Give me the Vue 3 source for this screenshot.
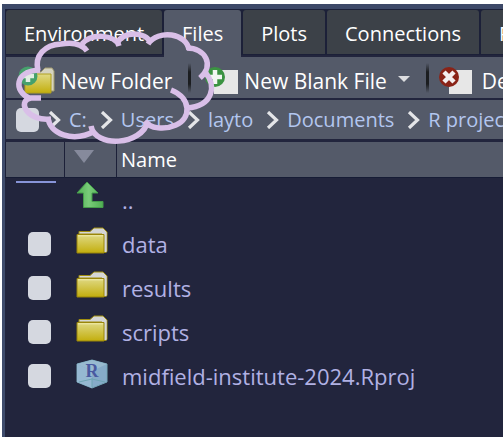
<script setup>
import { ref } from 'vue'

const tabs = ['Environment', 'Files', 'Plots', 'Connections', 'Packages']
const active = ref('Files')
const crumbs = ['C:', 'Users', 'layto', 'Documents', 'R projects']
const files = [
  { name: 'data', kind: 'folder' },
  { name: 'results', kind: 'folder' },
  { name: 'scripts', kind: 'folder' },
  { name: 'midfield-institute-2024.Rproj', kind: 'project' },
]
</script>

<template>
  <main class="window">
    <svg class="defs" aria-hidden="true">
      <defs>
        <linearGradient id="gold" x1="0" y1="0" x2="0" y2="1">
          <stop offset="0" stop-color="#dfd984" />
          <stop offset="1" stop-color="#c3ae0c" />
        </linearGradient>
        <linearGradient id="leaf" x1="0" y1="0" x2="1" y2="0">
          <stop offset="0" stop-color="#50b053" />
          <stop offset="0.45" stop-color="#79cc79" />
          <stop offset="1" stop-color="#4fae52" />
        </linearGradient>
        <symbol id="folder" viewBox="0 0 32 28">
          <path d="M3 7V4.500H14L18 1H27L31 5V24Q31 25.500 29 25.500H26V7Z" fill="#d5d6d6" stroke="#a08e10" />
          <path d="M28.500 7V25H30.500V5" fill="#d5d6d6" />
          <path d="M1 7.500H28V26H1Z" fill="url(#gold)" stroke="#9a860a" />
          <path d="M2 8.800H27" stroke="#f0ecaa" />
        </symbol>
      </defs>
    </svg>

    <div class="pane">
      <nav class="tabs">
        <button v-for="t in tabs" :key="t" class="tab" :class="{ on: t === active }" @click="active = t">{{ t }}</button>
      </nav>

      <div class="toolbar">
        <button class="tool">
          <svg class="tool-icon" viewBox="0 0 37 30">
            <path d="M9 7H23L27 3H34L36 6V26H9Z" fill="#d5d3c0" stroke="#a29b70" />
            <path d="M7 9H33V28H7Z" fill="url(#gold)" stroke="#b0a020" />
            <circle cx="10" cy="11" r="9.500" fill="#46a06c" />
            <path d="M10 5V17M4 11H16" stroke="#e2eee4" stroke-width="4.500" />
          </svg>
          New Folder
        </button>
        <span class="rule"></span>
        <button class="tool">
          <svg class="tool-icon" viewBox="0 0 37 30">
            <path d="M13 5H37V29H13Z" fill="#e7e7e7" />
            <circle cx="14" cy="12" r="10" fill="#3b9342" />
            <path d="M14 5V19M7 12H21" stroke="#f2f7f2" stroke-width="4.500" />
          </svg>
          New Blank File
          <svg class="caret" viewBox="0 0 12 6"><path d="M0 0H12L6 6Z" fill="#dcdde0" /></svg>
        </button>
        <span class="rule"></span>
        <button class="tool">
          <svg class="tool-icon" viewBox="0 0 37 30">
            <path d="M10 5H33V29H10Z" fill="#e7e7e7" />
            <circle cx="10" cy="12" r="10" fill="#8a2317" />
            <path d="M5 7L15 17M15 7L5 17" stroke="#f4eeee" stroke-width="4.500" />
          </svg>
          Delete
        </button>
      </div>

      <div class="crumbs">
        <input type="checkbox" class="box" aria-label="Select all files" />
        <template v-for="c in crumbs" :key="c">
          <svg class="chevron" viewBox="0 0 13 18"><path d="M2 1L10.500 9L2 17" fill="none" stroke="#e4e5e8" stroke-width="3.200" /></svg>
          <a href="#" class="crumb">{{ c }}</a>
        </template>
      </div>

      <table class="files">
        <thead>
          <tr>
            <th class="pick"></th>
            <th class="kind"><svg class="sort" viewBox="0 0 20 13"><path d="M0 0H20L10 13Z" fill="#868a9c" /></svg></th>
            <th class="name">Name</th>
          </tr>
        </thead>
        <tbody>
          <tr>
            <td class="pick parent"><span class="dash"></span></td>
            <td class="kind">
              <svg class="up" viewBox="0 0 28 28">
                <path d="M11 1L22 12H16V20.500H27V26.500H7.500V12H1Z" fill="url(#leaf)" stroke="#459c4b" />
              </svg>
            </td>
            <td class="name"><a href="#">..</a></td>
          </tr>
          <tr v-for="f in files" :key="f.name">
            <td class="pick"><input type="checkbox" class="box" :aria-label="f.name" /></td>
            <td class="kind">
              <svg v-if="f.kind === 'folder'" class="icon" viewBox="0 0 32 28"><use href="#folder" /></svg>
              <svg v-else class="icon project" viewBox="0 0 32 30">
                <path d="M16 1L31 5V23L16 29L1 23V5Z" fill="#86abc9" stroke="#75a7b7" />
                <path d="M16 1L31 5L16 12L1 5Z" fill="#98bad0" />
                <path d="M16 12V29L1 23V5Z" fill="#96b8d2" />
                <path d="M16 19V28M3 23L16 20L29 23" fill="none" stroke="#6fa5b4" />
                <text x="16" y="18" text-anchor="middle" class="letter">R</text>
              </svg>
            </td>
            <td class="name"><a href="#">{{ f.name }}</a></td>
          </tr>
        </tbody>
      </table>
    </div>

    <svg class="cloud" viewBox="0 0 210 120" aria-hidden="true">
      <g transform="translate(-10 -28)" fill="none" stroke="#d9bfe8" stroke-width="5.500">
        <path d="M38 71C34 55 45 45 61 44C72 42 82 44 87 51" />
        <path d="M82 44C91 33 115 34 119 46" />
        <path d="M117 43C124 31 145 31 151 43" />
        <path d="M148 44C158 29 187 33 189 50" />
        <path d="M187 48C205 48 215 65 200 78" />
        <path d="M205 72C217 86 213 106 187 108" />
        <path d="M171 90C192 98 191 119 176 125C165 130 150 129 145 121" />
        <path d="M148 121C142 146 95 148 91 126" />
        <path d="M95 131C73 143 49 134 48 117" />
        <path d="M51 119C28 122 16 101 31 98H41" />
        <path d="M29 98C14 91 14 71 40 70" />
      </g>
    </svg>
  </main>
</template>

<style>
body {
  margin: 0;
  background: #fff;
  overflow: hidden;
}
</style>

<style scoped>
.window {
  box-sizing: border-box;
  min-height: 100vh;
  padding: 4px 0 0 2px;
  display: flex;
  overflow: hidden;
  position: relative;
  font-family: "Open Sans", "Noto Sans", sans-serif;
  font-size: 20px;
  line-height: 30px;
  color: #fff;
}
.defs {
  position: absolute;
  width: 0;
  height: 0;
}
.pane {
  flex: 1;
  min-width: 0;
  border-left: 3px solid #3f4c6c;
  border-top: 5px solid #3d4968;
  background: #22253d;
  overflow: hidden;
}
button {
  font: inherit;
  color: inherit;
  border: 0;
  margin: 0;
  white-space: nowrap;
}
.tabs {
  display: flex;
  height: 45px;
  gap: 2px;
  padding: 1px 0 0 1px;
  background: #1c2038;
}
.tab {
  flex: none;
  height: 44px;
  padding: 4px 18px 0;
  background: #3c4148;
  border-radius: 3px 3px 0 0;
}
.tab.on {
  height: 47px;
  padding-bottom: 3px;
  background: #545a69;
}
.toolbar {
  display: flex;
  align-items: center;
  height: 41px;
  margin: 2px 0 0 1px;
  padding-left: 12px;
  background: #545a69;
  font-size: 21px;
}
.tool {
  display: flex;
  flex: none;
  align-items: center;
  gap: 6px;
  padding: 6px 0 0;
  background: none;
}
.tool-icon {
  width: 37px;
  height: 30px;
  margin-bottom: 2px;
}
.caret {
  width: 12px;
  height: 6px;
  margin: 0 0 4px 5px;
}
.rule {
  flex: none;
  width: 3px;
  height: 30px;
  margin: 0 10px 0 16px;
  background: linear-gradient(#545a69, #1b1d20 30%, #1b1d20 70%, #545a69);
}
.crumbs {
  display: flex;
  align-items: center;
  gap: 8px;
  height: 39px;
  margin: 2px 0 0 1px;
  padding: 0 0 0 10px;
  background: #545a69;
  white-space: nowrap;
}
.crumbs .box {
  margin-right: 1px;
}
.chevron {
  flex: none;
  width: 13px;
  height: 18px;
}
a {
  text-decoration: none;
  color: #b1b1e4;
}
.crumb {
  margin-right: 5px;
  color: #b3c6ef;
}
.box {
  appearance: none;
  flex: none;
  display: block;
  width: 23px;
  height: 24px;
  margin: 0;
  border-radius: 5px;
  background: #d5d8e0;
}
.files {
  width: 100%;
  table-layout: fixed;
  border-collapse: separate;
  border-spacing: 0;
  margin-top: 3px;
}
th,
td {
  box-sizing: border-box;
  padding: 0;
  text-align: left;
  font-weight: 400;
}
th {
  height: 36px;
  background: #545a69;
  border-left: 1px solid #1c2038;
  border-bottom: 1px solid #161c35;
}
td {
  height: 44px;
  font-size: 22px;
}
th.pick {
  width: 59px;
}
th.kind {
  width: 52px;
}
.pick .box {
  margin-left: 23px;
}
td.parent {
  vertical-align: top;
}
.dash {
  display: block;
  width: 40px;
  height: 2px;
  margin: 3px 0 0 11px;
  background: #8794d8;
}
th.kind,
td.kind {
  padding-left: 12px;
}
th.kind {
  padding-left: 9px;
}
.kind svg {
  display: block;
}
.sort {
  width: 20px;
  height: 13px;
  margin-bottom: 6px;
}
.up {
  width: 28px;
  height: 28px;
  margin-bottom: 10px;
}
.icon {
  width: 32px;
  height: 28px;
  margin-bottom: 6px;
}
.project {
  height: 30px;
  margin-bottom: 4px;
}
.letter {
  font: bold 18px "Liberation Serif", serif;
  fill: #4959a0;
}
th.name {
  padding-left: 4px;
}
td.name {
  padding-left: 6px;
}
.cloud {
  position: absolute;
  left: 10px;
  top: 28px;
  width: 210px;
  height: 120px;
  pointer-events: none;
}
</style>
